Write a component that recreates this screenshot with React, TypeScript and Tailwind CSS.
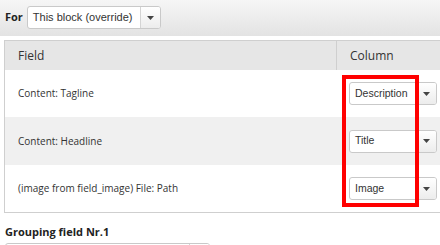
function Arrow() {
  return (
    <svg width="7" height="4" viewBox="0 0 7 4">
      <path d="M0 0 L7 0 L3.5 4 Z" fill="#444" />
    </svg>
  );
}

function Select({
  label,
  width,
  textWidth,
  textSize,
}: {
  label: string;
  width: string;
  textWidth: string;
  textSize: string;
}) {
  return (
    <div
      className={`flex h-[23px] ${width} overflow-hidden rounded-[3px] border border-[#c9c9c9] bg-white`}
    >
      <div
        className={`flex ${textWidth} items-center pl-[5px] ${textSize} text-[#333] [font-family:'Liberation_Sans',Arial,sans-serif]`}
      >
        {label}
      </div>
      <div className="flex flex-1 items-center justify-center border-l border-[#d4d4d4] bg-gradient-to-b from-white to-[#ececec]">
        <Arrow />
      </div>
    </div>
  );
}

const rows = [
  { field: "Content: Tagline", column: "Description", bg: "bg-white", h: "h-[47px]" },
  { field: "Content: Headline", column: "Title", bg: "bg-[#f0f0f0]", h: "h-[48px]" },
  { field: "(image from field_image) File: Path", column: "Image", bg: "bg-white", h: "h-[47px]" },
];

export default function App() {
  return (
    <div className="relative h-[245px] w-[440px] overflow-hidden bg-white text-[#333] [font-family:'Open_Sans',sans-serif]">
      <div className="flex h-[36px] items-center gap-[4px] bg-gradient-to-b from-[#f6f6f6] to-[#e3e3e3] pl-[5px] pb-[1px]">
        <span className="text-[11px] font-bold text-[#222]">For</span>
        <Select
          label="This block (override)"
          width="w-[134px]"
          textWidth="w-[112px]"
          textSize="text-[11px]"
        />
      </div>

      <div className="ml-[4px] mt-[4px] w-[450px] border border-r-0 border-[#cfcfcf]">
        <div className="flex h-[29px] bg-[#e6e6e6] text-[12px]">
          <div className="flex w-[331px] items-center pl-[13px]">Field</div>
          <div className="flex flex-1 items-center border-l border-[#cfcfcf] pl-[13px]">
            Column
          </div>
        </div>
        {rows.map((r) => (
          <div key={r.field} className={`flex ${r.h} ${r.bg} text-[10px]`}>
            <div className="flex w-[331px] items-center pl-[13px]">{r.field}</div>
            <div className="flex flex-1 items-center pl-[13px]">
              <Select
                label={r.column}
                width="w-[88px]"
                textWidth="w-[65px]"
                textSize="text-[10.5px]"
              />
            </div>
          </div>
        ))}
      </div>

      <div className="mt-[12px] pl-[5px] text-[11px] leading-[14px] font-bold text-[#222]">
        Grouping field Nr.1
      </div>
      <div className="mt-[4px] pl-[5px]">
        <Select label="" width="w-[205px]" textWidth="w-[183px]" textSize="text-[11px]" />
      </div>

      <div className="absolute left-[342px] top-[75px] h-[132px] w-[77px] border-4 border-[#ff0000]" />
    </div>
  );
}
